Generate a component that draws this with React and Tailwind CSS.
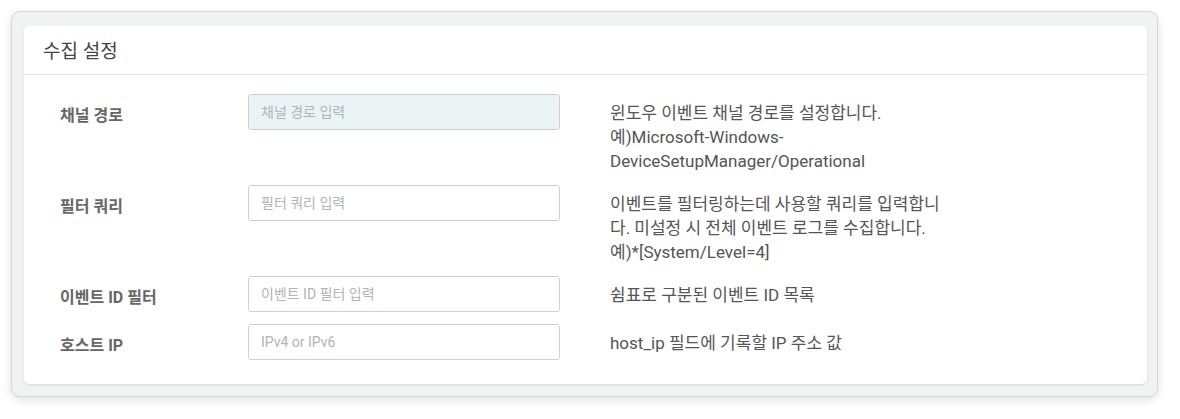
import React from 'react';

const FONT = "font-['Roboto','Noto_Sans_CJK_KR',sans-serif]";

const rows = [
  {
    label: '채널 경로',
    placeholder: '채널 경로 입력',
    readOnly: true,
    desc: ['윈도우 이벤트 채널 경로를 설정합니다.', '예)Microsoft-Windows-', 'DeviceSetupManager/Operational'],
  },
  {
    label: '필터 쿼리',
    placeholder: '필터 쿼리 입력',
    desc: ['이벤트를 필터링하는데 사용할 쿼리를 입력합니', '다. 미설정 시 전체 이벤트 로그를 수집합니다.', '예)*[System/Level=4]'],
  },
  {
    label: '이벤트 ID 필터',
    placeholder: '이벤트 ID 필터 입력',
    desc: ['쉼표로 구분된 이벤트 ID 목록'],
  },
  {
    label: '호스트 IP',
    placeholder: 'IPv4 or IPv6',
    desc: ['host_ip 필드에 기록할 IP 주소 값'],
  },
];

export default function App() {
  return (
    <div className={`${FONT} w-[1180px] h-[419px] bg-white pt-[11px] pl-[11px]`}>
      <div className="w-[1147px] h-[386px] bg-[#f1f2f2] border border-[#d6d6d6] rounded-[9px] shadow-[0_3px_10px_rgba(0,0,0,0.12)] pt-[14px] pl-[12px]">
        <div className="w-[1123px] h-[358px] bg-white rounded-[5px] shadow-[0_1px_2px_rgba(0,0,0,0.12)]">
          {/* header */}
          <div className="h-[49px] border-b border-[#e6e6e6] pl-[19px] flex items-center">
            <h2 className="text-[19px] text-[#444] leading-none pt-[2px]">수집 설정</h2>
          </div>

          {/* form */}
          <div className="pt-[19px] flex flex-col gap-[12px]">
            {rows.map((row) => (
              <div key={row.label} className="flex items-start">
                <div className="w-[224px] pl-[36px] pt-[10px] text-[16px] leading-[24px] font-bold text-[#666]">
                  {row.label}
                </div>
                <input
                  type="text"
                  readOnly={row.readOnly}
                  placeholder={row.placeholder}
                  className={`w-[312px] h-[36px] border border-[#cfcfcf] rounded-[3px] px-[12px] text-[14px] text-[#555] placeholder:text-[#b3b3b3] outline-none ${
                    row.readOnly ? 'bg-[#eaf3f6]' : 'bg-white'
                  }`}
                />
                <div className="ml-[50px] w-[335px] pt-[7px] text-[17px] leading-[24px] text-[#555]">
                  {row.desc.map((line) => (
                    <div key={line}>{line}</div>
                  ))}
                </div>
              </div>
            ))}
          </div>
        </div>
      </div>
    </div>
  );
}
